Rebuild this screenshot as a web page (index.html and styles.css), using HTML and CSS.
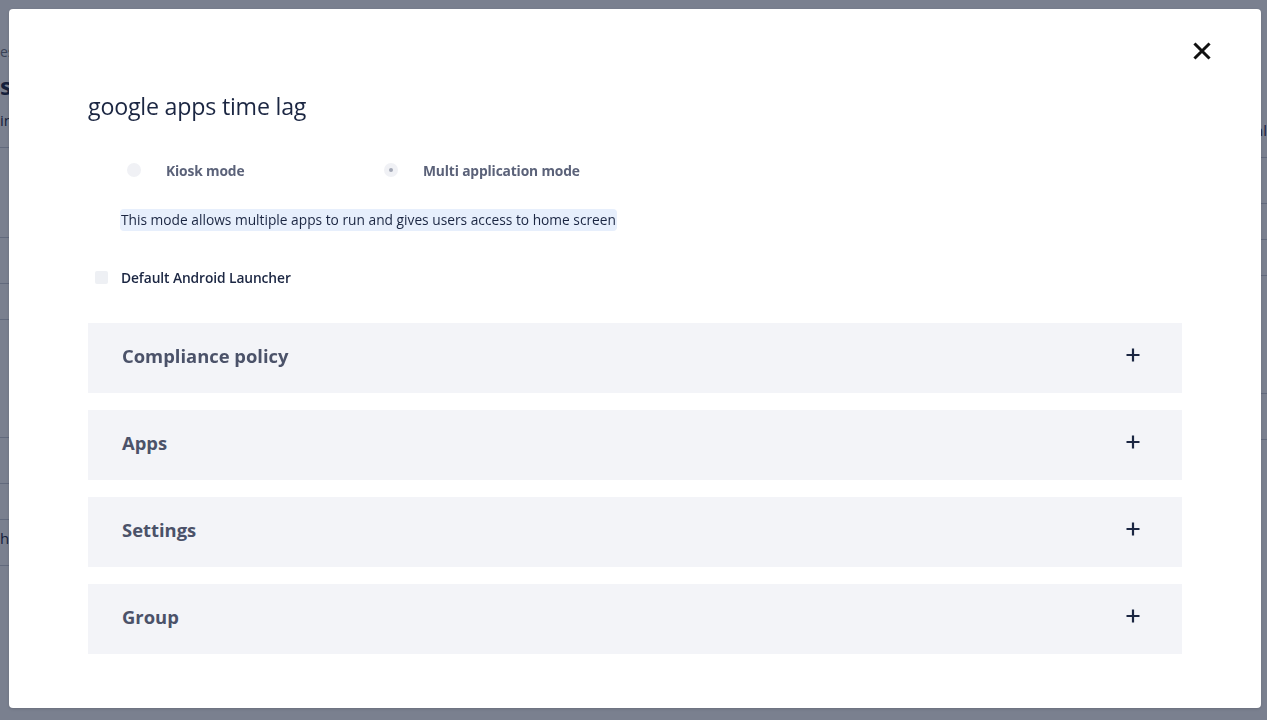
FILE: index.html
```html
<!DOCTYPE html>
<html lang="en">
<head>
<meta charset="utf-8">
<title>google apps time lag</title>
<link rel="stylesheet" href="styles.css">
</head>
<body>
<div class="page">
  <div class="page-left">
    <div class="crumb">es</div>
    <div class="page-title">s</div>
    <div class="row row-text">in</div>
    <div class="row gap1"></div>
    <div class="row"></div>
    <div class="row short"></div>
    <div class="row tall"></div>
    <div class="row"></div>
    <div class="row short"></div>
    <div class="row row-text">h</div>
  </div>
  <div class="page-right">
    <div class="row row-text right">nl</div>
    <div class="row"></div>
    <div class="row short"></div>
    <div class="row short"></div>
    <div class="row tall"></div>
    <div class="row"></div>
  </div>
</div>

<div class="overlay">
  <div class="modal">
    <button class="close" aria-label="Close">
      <svg width="18" height="18" viewBox="0 0 18 18"><path d="M2.5 2.5 L15.5 15.5 M15.5 2.5 L2.5 15.5" stroke="#111" stroke-width="3" stroke-linecap="square"/></svg>
    </button>
    <h1 class="title">google apps time lag</h1>

    <div class="modes">
      <label class="mode">
        <span class="radio"></span>
        <span class="mode-label">Kiosk mode</span>
      </label>
      <label class="mode">
        <span class="radio checked"><span class="dot"></span></span>
        <span class="mode-label">Multi application mode</span>
      </label>
    </div>

    <div class="desc">This mode allows multiple apps to run and gives users access to home screen</div>

    <label class="launcher">
      <span class="checkbox"></span>
      <span class="launcher-label">Default Android Launcher</span>
    </label>

    <div class="panels">
      <div class="panel"><span class="panel-title">Compliance policy</span><svg class="plus" width="16" height="16" viewBox="0 0 16 16"><path d="M8 1.5 V14.5 M1.5 8 H14.5" stroke="#1b2642" stroke-width="2.2"/></svg></div>
      <div class="panel"><span class="panel-title">Apps</span><svg class="plus" width="16" height="16" viewBox="0 0 16 16"><path d="M8 1.5 V14.5 M1.5 8 H14.5" stroke="#1b2642" stroke-width="2.2"/></svg></div>
      <div class="panel"><span class="panel-title">Settings</span><svg class="plus" width="16" height="16" viewBox="0 0 16 16"><path d="M8 1.5 V14.5 M1.5 8 H14.5" stroke="#1b2642" stroke-width="2.2"/></svg></div>
      <div class="panel"><span class="panel-title">Group</span><svg class="plus" width="16" height="16" viewBox="0 0 16 16"><path d="M8 1.5 V14.5 M1.5 8 H14.5" stroke="#1b2642" stroke-width="2.2"/></svg></div>
    </div>
  </div>
</div>
</body>
</html>
```

FILE: styles.css
```css
* { box-sizing: border-box; }
html, body { margin: 0; padding: 0; }
body {
  width: 1267px;
  height: 720px;
  overflow: hidden;
  background: #ffffff;
  font-family: "Open Sans", "Noto Sans", sans-serif;
  color: #1b2642;
}

/* background page (dimmed by overlay) */
.page {
  display: flex;
  justify-content: space-between;
  height: 720px;
}
.page-left { width: 60px; }
.page-right { width: 60px; padding-top: 112px; }
.crumb { margin-top: 42px; font-size: 14px; color: #6b7280; }
.page-title { margin-top: 8px; font-size: 24px; font-weight: 700; color: #1b2642; }
.row { height: 46px; border-bottom: 1px solid #c9cdd6; }
.row.short { height: 36px; }
.row.gap1 { height: 90px; }
.row.tall { height: 118px; }
.row-text { font-size: 15px; color: #1b2642; line-height: 36px; }
.row-text.right { text-align: right; padding-right: 0; }

.overlay {
  position: fixed;
  inset: 0;
  background: rgba(18, 28, 56, 0.56);
  padding: 9px 6px 12px 9px;
}
.modal {
  position: relative;
  width: 1252px;
  height: 699px;
  background: #ffffff;
  border-radius: 4px;
  padding: 81px 79px 0 79px;
  box-shadow: 0 1px 3px rgba(0,0,0,0.15);
}
.close {
  position: absolute;
  top: 33px;
  right: 50px;
  width: 18px;
  height: 18px;
  padding: 0;
  border: 0;
  background: none;
  display: flex;
}

.title {
  margin: 0;
  font-size: 23.2px;
  line-height: 32px;
  font-weight: 400;
  color: #1b2642;
  letter-spacing: -0.2px;
}

.modes {
  display: flex;
  margin: 38px 0 0 39px;
  height: 20px;
  align-items: center;
}
.mode {
  display: flex;
  align-items: center;
  width: 257px;
}
.radio {
  width: 14px;
  height: 14px;
  border-radius: 50%;
  background: #f0f1f5;
  margin-right: 25px;
  display: flex;
  align-items: center;
  justify-content: center;
  flex: none;
}
.dot { width: 4px; height: 4px; border-radius: 50%; background: #a3a8b6; }
.mode-label {
  font-size: 13.8px;
  font-weight: 700;
  color: #5b6279;
  letter-spacing: -0.15px;
}

.desc {
  display: inline-block;
  margin: 29px 0 0 32px;
  padding: 0 1px;
  height: 22px;
  line-height: 22px;
  font-size: 13.75px;
  background: #e7effc;
  border-radius: 4px;
  color: #1b2642;
}

.launcher {
  display: flex;
  align-items: center;
  margin: 36px 0 0 7px;
  height: 20px;
}
.checkbox {
  width: 13px;
  height: 13px;
  border-radius: 2px;
  background: #eef0f4;
  margin-right: 13px;
}
.launcher-label {
  font-size: 13.8px;
  font-weight: 600;
  color: #1b2642;
  letter-spacing: -0.1px;
}

.panels {
  margin-top: 36px;
  display: flex;
  flex-direction: column;
  gap: 17px;
}
.panel {
  height: 70px;
  background: #f3f4f8;
  display: flex;
  align-items: center;
  justify-content: space-between;
  padding: 0 41px 6px 34px;
}
.panel-title {
  font-size: 18.4px;
  font-weight: 700;
  color: #4b5269;
}
.plus { display: block; }
```
